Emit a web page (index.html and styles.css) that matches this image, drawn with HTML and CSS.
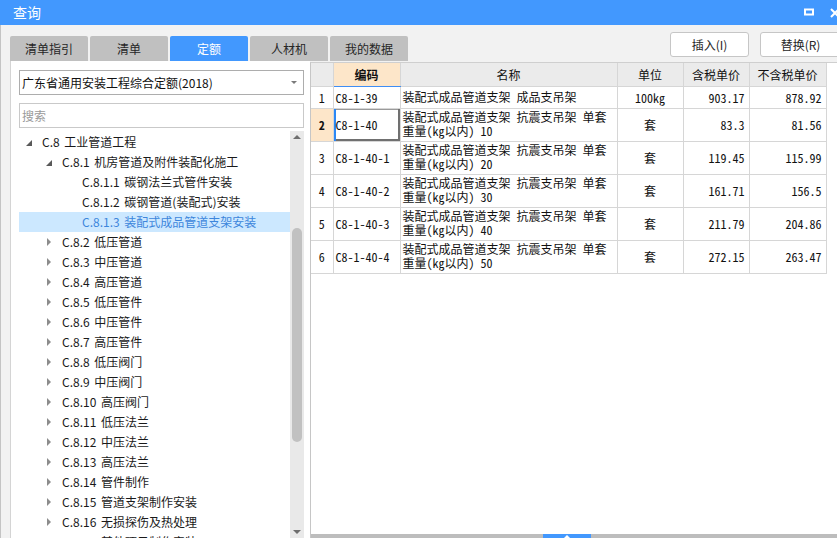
FILE: index.html
```html
<!DOCTYPE html>
<html lang="zh-CN">
<head>
<meta charset="utf-8">
<title>查询</title>
<link rel="stylesheet" href="styles.css">
</head>
<body>
<div class="window">
  <header class="titlebar">
    <span class="title">查询</span>
    <div class="winctl">
      <svg class="ic-max" width="10" height="8" viewBox="0 0 10 8"><rect x="1" y="1.5" width="8" height="5" fill="none" stroke="#fff" stroke-width="2"/></svg>
      <svg class="ic-close" width="10" height="10" viewBox="0 0 10 10"><path d="M1 1L9 9M9 1L1 9" stroke="#fff" stroke-width="2"/></svg>
    </div>
  </header>
  <div class="body">
    <div class="toolbar">
      <nav class="tabs">
        <div class="tab">清单指引</div>
        <div class="tab">清单</div>
        <div class="tab active">定额</div>
        <div class="tab">人材机</div>
        <div class="tab">我的数据</div>
      </nav>
      <div class="actions">
        <button class="btn">插入(I)</button>
        <button class="btn wide">替换(R)</button>
      </div>
    </div>
    <div class="main">
      <aside class="left">
        <div class="select"><span>广东省通用安装工程综合定额(2018)</span><span class="caret"></span></div>
        <div class="search">搜索</div>
        <div class="treewrap">
          <ul class="tree">
            <li class="lv0"><span class="tw"><span class="exp"></span></span>C.8 工业管道工程</li>
            <li class="lv1"><span class="tw"><span class="exp"></span></span>C.8.1 机房管道及附件装配化施工</li>
            <li class="lv2"><span class="tw"></span>C.8.1.1 碳钢法兰式管件安装</li>
            <li class="lv2"><span class="tw"></span>C.8.1.2 碳钢管道(装配式)安装</li>
            <li class="lv2 sel"><span class="tw"></span>C.8.1.3 装配式成品管道支架安装</li>
            <li class="lv1"><span class="tw"><span class="col"></span></span>C.8.2 低压管道</li>
            <li class="lv1"><span class="tw"><span class="col"></span></span>C.8.3 中压管道</li>
            <li class="lv1"><span class="tw"><span class="col"></span></span>C.8.4 高压管道</li>
            <li class="lv1"><span class="tw"><span class="col"></span></span>C.8.5 低压管件</li>
            <li class="lv1"><span class="tw"><span class="col"></span></span>C.8.6 中压管件</li>
            <li class="lv1"><span class="tw"><span class="col"></span></span>C.8.7 高压管件</li>
            <li class="lv1"><span class="tw"><span class="col"></span></span>C.8.8 低压阀门</li>
            <li class="lv1"><span class="tw"><span class="col"></span></span>C.8.9 中压阀门</li>
            <li class="lv1"><span class="tw"><span class="col"></span></span>C.8.10 高压阀门</li>
            <li class="lv1"><span class="tw"><span class="col"></span></span>C.8.11 低压法兰</li>
            <li class="lv1"><span class="tw"><span class="col"></span></span>C.8.12 中压法兰</li>
            <li class="lv1"><span class="tw"><span class="col"></span></span>C.8.13 高压法兰</li>
            <li class="lv1"><span class="tw"><span class="col"></span></span>C.8.14 管件制作</li>
            <li class="lv1"><span class="tw"><span class="col"></span></span>C.8.15 管道支架制作安装</li>
            <li class="lv1"><span class="tw"><span class="col"></span></span>C.8.16 无损探伤及热处理</li>
            <li class="lv1"><span class="tw"><span class="col"></span></span>C.8.17 其他项目制作安装</li>
          </ul>
          <div class="vscroll">
            <span class="up"></span>
            <div class="track"><div class="thumb"></div></div>
            <span class="down"></span>
          </div>
        </div>
      </aside>
      <section class="grid">
        <div class="tablewrap">
          <table class="quota">
            <colgroup>
              <col class="c-no"><col class="c-code"><col class="c-name"><col class="c-unit"><col class="c-price"><col class="c-price2">
            </colgroup>
            <thead>
              <tr>
                <th></th>
                <th class="cur-col">编码</th>
                <th>名称</th>
                <th>单位</th>
                <th>含税单价</th>
                <th>不含税单价</th>
              </tr>
            </thead>
            <tbody>
              <tr class="r1">
                <td class="no">1</td>
                <td class="code">C8-1-39</td>
                <td class="name">装配式成品管道支架 成品支吊架</td>
                <td class="unit">100kg</td>
                <td class="num">903.17</td>
                <td class="num">878.92</td>
              </tr>
              <tr class="r2 current">
                <td class="no">2</td>
                <td class="code focus">C8-1-40</td>
                <td class="name">装配式成品管道支架 抗震支吊架 单套<br>重量(kg以内) 10</td>
                <td class="unit">套</td>
                <td class="num">83.3</td>
                <td class="num">81.56</td>
              </tr>
              <tr class="r2">
                <td class="no">3</td>
                <td class="code">C8-1-40-1</td>
                <td class="name">装配式成品管道支架 抗震支吊架 单套<br>重量(kg以内) 20</td>
                <td class="unit">套</td>
                <td class="num">119.45</td>
                <td class="num">115.99</td>
              </tr>
              <tr class="r2">
                <td class="no">4</td>
                <td class="code">C8-1-40-2</td>
                <td class="name">装配式成品管道支架 抗震支吊架 单套<br>重量(kg以内) 30</td>
                <td class="unit">套</td>
                <td class="num">161.71</td>
                <td class="num">156.5</td>
              </tr>
              <tr class="r2">
                <td class="no">5</td>
                <td class="code">C8-1-40-3</td>
                <td class="name">装配式成品管道支架 抗震支吊架 单套<br>重量(kg以内) 40</td>
                <td class="unit">套</td>
                <td class="num">211.79</td>
                <td class="num">204.86</td>
              </tr>
              <tr class="r2">
                <td class="no">6</td>
                <td class="code">C8-1-40-4</td>
                <td class="name">装配式成品管道支架 抗震支吊架 单套<br>重量(kg以内) 50</td>
                <td class="unit">套</td>
                <td class="num">272.15</td>
                <td class="num">263.47</td>
              </tr>
            </tbody>
          </table>
        </div>
        <div class="hbar"><div class="handle"><span class="tip"></span></div></div>
      </section>
    </div>
  </div>
</div>
</body>
</html>
```

FILE: styles.css
```css
* { box-sizing: border-box; margin: 0; padding: 0; }
html, body { width: 837px; height: 538px; overflow: hidden; }
body {
  background: #f2f2f2;
  font-family: "Noto Sans CJK SC", "Microsoft YaHei", sans-serif;
  font-size: 12px;
  color: #1a1a1a;
}
.window { display: flex; flex-direction: column; height: 538px; overflow: hidden; }

/* title bar */
.titlebar {
  flex: none;
  height: 25px;
  background: #4298fe;
  color: #fff;
  display: flex;
  align-items: center;
  justify-content: space-between;
}
.title { padding-left: 13px; font-size: 14px; line-height: 25px; }
.winctl { display: flex; align-items: center; gap: 16px; margin-right: -3px; }
.ic-max { display: block; margin-top: -1px; }
.ic-close { display: block; }

.body {
  flex: 1;
  min-height: 0;
  display: flex;
  flex-direction: column;
  border-left: 1px solid #c4c4c4;
}

/* toolbar with tabs and buttons */
.toolbar { flex: none; height: 36px; display: flex; justify-content: space-between; }
.tabs { display: flex; gap: 2px; margin-left: 9px; margin-top: 11px; }
.tab {
  width: 78px;
  height: 25px;
  background: #c0c0c0;
  border-radius: 2px 2px 0 0;
  text-align: center;
  line-height: 25px;
  color: #262626;
}
.tab.active { background: #4298fe; color: #fff; }
.actions { display: flex; gap: 11px; margin-top: 7px; margin-right: -4px; }
.btn {
  width: 79px;
  height: 25px;
  background: #fff;
  border: 1px solid #c6c6c6;
  border-radius: 3px;
  font: inherit;
  font-size: 12px;
  color: #262626;
}
.btn.wide { width: 81px; }

/* main area */
.main { flex: 1; min-height: 0; display: flex; }

.left {
  flex: none;
  width: 300px;
  margin-left: 9px;
  background: #fff;
  border-left: 1px solid #d4d4d4;
  padding: 9px 6px 0 8px;
  display: flex;
  flex-direction: column;
  min-height: 0;
}
.select {
  flex: none;
  height: 25px;
  border: 1px solid #adadad;
  padding-left: 2px;
  display: flex;
  align-items: center;
  justify-content: space-between;
  color: #111;
}
.caret {
  width: 0; height: 0;
  border-left: 3px solid transparent;
  border-right: 3px solid transparent;
  border-top: 3px solid #7a7a7a;
  margin-right: 6px;
}
.search {
  flex: none;
  margin-top: 8px;
  height: 25px;
  border: 1px solid #c9c9c9;
  padding-left: 2px;
  line-height: 23px;
  color: #9a9a9a;
}
.treewrap { flex: 1; min-height: 0; margin-top: 3px; display: flex; overflow: hidden; }
.tree { flex: 1; list-style: none; padding-top: 1px; overflow: hidden; word-spacing: 2px; }
.tree li {
  height: 20px;
  line-height: 20px;
  display: flex;
  align-items: center;
  white-space: nowrap;
  color: #1a1a1a;
}
.tree .lv0 { padding-left: 3px; }
.tree .lv1 { padding-left: 23px; }
.tree .lv2 { padding-left: 43px; }
.tree li.sel { background: #cce8ff; color: #3d86dc; }
.tw { width: 20px; height: 20px; flex: none; display: flex; align-items: center; }
.exp {
  width: 0; height: 0;
  margin-left: 4px;
  margin-top: 1px;
  border-left: 6px solid transparent;
  border-bottom: 6px solid #595959;
}
.col {
  width: 0; height: 0;
  margin-left: 5px;
  border-top: 4px solid transparent;
  border-bottom: 4px solid transparent;
  border-left: 4px solid #8c8c8c;
}
.vscroll {
  flex: none;
  width: 14px;
  background: #e9e9e9;
  display: flex;
  flex-direction: column;
  align-items: center;
}
.up, .down { flex: none; height: 10px; display: flex; align-items: center; justify-content: center; }
.up { margin-top: 1px; }
.up::before {
  content: "";
  border-left: 4px solid transparent;
  border-right: 4px solid transparent;
  border-bottom: 4px solid #6e6e6e;
}
.down { margin-bottom: 1px; }
.down::before {
  content: "";
  border-left: 4px solid transparent;
  border-right: 4px solid transparent;
  border-top: 4px solid #6e6e6e;
}
.track { flex: 1; width: 100%; display: flex; justify-content: center; }
.thumb { width: 10px; height: 214px; margin-top: 86px; background: #c1c1c1; border-radius: 5px; }

/* grid */
.grid {
  flex: 1;
  min-width: 0;
  display: flex;
  flex-direction: column;
  margin-top: 1px;
  background: #fff;
  border-left: 1px solid #c6c6c6;
  border-top: 1px solid #cfcfcf;
}
.tablewrap { flex: 1; min-height: 0; overflow: hidden; }
.quota {
  border-collapse: collapse;
  table-layout: fixed;
  width: 515px;
  font-family: "Noto Sans Mono CJK SC", "Noto Sans CJK SC", "Liberation Mono", monospace;
  font-size: 12px;
  color: #111;
}
.c-no { width: 22px; }
.c-code { width: 67px; }
.c-name { width: 217px; }
.c-unit { width: 66px; }
.c-price { width: 66px; }
.c-price2 { width: 77px; }
.quota th, .quota td { border: 1px solid #d6d6d6; padding: 0; }
.quota tr > :first-child { border-left: 0; }
.quota thead th {
  border-top: 0;
  height: 23px;
  background: #ebebeb;
  font-weight: normal;
  text-align: center;
}
.quota thead th.cur-col {
  background: #fde6c9;
  font-weight: bold;
  border-bottom: 1px solid #3f8ef5;
}
.quota tr.r1 td { height: 22px; }
.quota tr.r2 td { height: 33px; }
.quota td.no { text-align: center; }
.quota tr.current td.no { background: #fde6c9; font-weight: bold; }
.quota td.code { padding-left: 2px; white-space: nowrap; }
.quota td.name { padding: 1px 0 0 2px; line-height: 14px; vertical-align: top; white-space: nowrap; }
.quota tr.r1 td.name { vertical-align: middle; padding-top: 0; }
.quota td.unit { text-align: center; }
.quota td.num { text-align: right; padding-right: 4px; }
.quota td.focus {
  box-shadow: inset 2px 0 0 #2b88f5, inset -2px -2px 0 #707070, inset 0 1px 0 #9a9a9a;
}

.hbar { flex: none; height: 4px; background: #bdbdbd; display: flex; }
.handle {
  margin-left: 232px;
  width: 48px;
  height: 4px;
  background: #4298fe;
  display: flex;
  justify-content: center;
}
.tip {
  width: 0; height: 0;
  border-left: 3px solid transparent;
  border-right: 3px solid transparent;
  border-bottom: 3px solid #fff;
  margin-top: 1px;
}
```
